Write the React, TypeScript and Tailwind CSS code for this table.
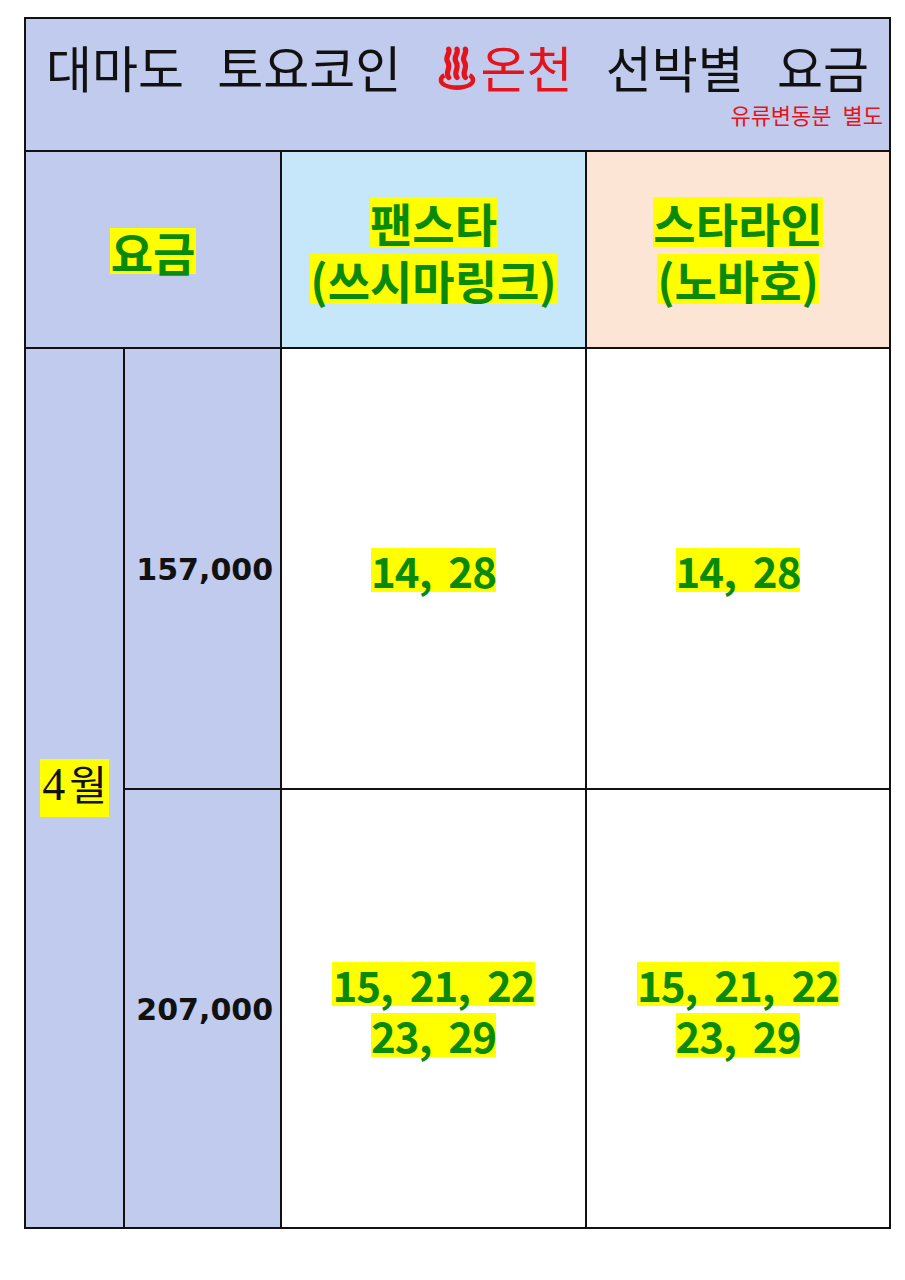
import React from "react";

const KR = "font-['Noto_Sans_CJK_KR','Noto_Sans',sans-serif]";

function HotSpring() {
  return (
    <svg width="44" height="46" viewBox="0 0 42 44" className="inline-block align-[-4px] mr-[2px]">
      <g fill="none" stroke="#e3141b" strokeWidth="5" strokeLinecap="round">
        <path d="M13 30 C9 25 16 21 12 15 C9 10 15 7 13 3" />
        <path d="M21 30 C17 25 24 21 20 15 C17 10 23 7 21 3" />
        <path d="M29 30 C25 25 32 21 28 15 C25 10 31 7 29 3" />
      </g>
      <path
        d="M8 26 C2 29 2 36 8 39 C15 43 27 43 34 39 C40 36 40 29 34 26 L32 30 C35 32 35 34 31 36 C25 38 17 38 11 36 C7 34 7 32 10 30 Z"
        fill="#e3141b"
      />
    </svg>
  );
}

function Mark({ children, className = "" }: { children: React.ReactNode; className?: string }) {
  return <span className={`inline-block bg-[#ffff00] ${className}`}>{children}</span>;
}

export default function App() {
  return (
    <div className="w-[905px] h-[1280px] bg-white pt-[17px] pl-[24px]">
      <div
        className={`w-[867px] border-2 border-[#111] bg-[#111] grid grid-cols-[97px_155px_303px_1fr] grid-rows-[131px_195px_439px_437px] gap-[2px] ${KR}`}
      >
        {/* title */}
        <div className="col-span-4 bg-[#c1cbed] flex flex-col">
          <div className="pt-[19px] text-center text-[50px] leading-[56px] text-[#111] [word-spacing:22px] whitespace-nowrap">
            대마도 토요코인{" "}
            <span className="text-[#e3141b]">
              <HotSpring />
              온천
            </span>{" "}
            선박별 요금
          </div>
          <div className="mt-[8px] pr-[6px] text-right text-[22px] leading-[24px] text-[#e3141b] [word-spacing:6px]">
            유류변동분 별도
          </div>
        </div>

        {/* header */}
        <div className="col-span-2 bg-[#c1cbed] flex items-center justify-center pt-[2px]">
          <Mark className="text-[46px] leading-[46px] font-bold text-[#0a8a0a] px-[1px]">요금</Mark>
        </div>
        <div className="bg-[#c6e7fa] flex flex-col items-center justify-center gap-[7px] pt-[2px]">
          <Mark className="text-[46px] leading-[50px] font-bold text-[#0a8a0a]">팬스타</Mark>
          <Mark className="text-[46px] leading-[50px] font-bold text-[#0a8a0a]">(쓰시마링크)</Mark>
        </div>
        <div className="bg-[#fde5d6] flex flex-col items-center justify-center gap-[7px] pt-[2px]">
          <Mark className="text-[46px] leading-[50px] font-bold text-[#0a8a0a]">스타라인</Mark>
          <Mark className="text-[46px] leading-[50px] font-bold text-[#0a8a0a]">(노바호)</Mark>
        </div>

        {/* month */}
        <div className="row-span-2 bg-[#c1cbed] flex items-center justify-center">
          <Mark className="text-[#111] leading-[47px] px-[2px]">
            <span className="font-['Liberation_Serif',serif] text-[46px]">4</span>
            <span className="text-[41px] ml-[4px]">월</span>
          </Mark>
        </div>

        {/* row 1 */}
        <div className="bg-[#c1cbed] flex items-center justify-end pr-[7px] pt-[2px]">
          <span className="font-['DejaVu_Sans',sans-serif] font-bold text-[30px] text-[#111]">157,000</span>
        </div>
        <div className="bg-white flex items-center justify-center pt-[2px]">
          <Mark className="text-[42px] leading-[44px] font-bold text-[#0a8a0a] whitespace-pre tracking-[-1px]">14,  28</Mark>
        </div>
        <div className="bg-white flex items-center justify-center pt-[2px]">
          <Mark className="text-[42px] leading-[44px] font-bold text-[#0a8a0a] whitespace-pre tracking-[-1px]">14,  28</Mark>
        </div>

        {/* row 2 */}
        <div className="bg-[#c1cbed] flex items-center justify-end pr-[7px] pt-[2px]">
          <span className="font-['DejaVu_Sans',sans-serif] font-bold text-[30px] text-[#111]">207,000</span>
        </div>
        {[0, 1].map((i) => (
          <div key={i} className="bg-white flex flex-col items-center justify-center gap-[7px] pt-[2px]">
            <Mark className="text-[42px] leading-[44px] font-bold text-[#0a8a0a] whitespace-pre tracking-[-1px]">15,  21,  22</Mark>
            <Mark className="text-[42px] leading-[44px] font-bold text-[#0a8a0a] whitespace-pre tracking-[-1px]">23,  29</Mark>
          </div>
        ))}
      </div>
    </div>
  );
}
